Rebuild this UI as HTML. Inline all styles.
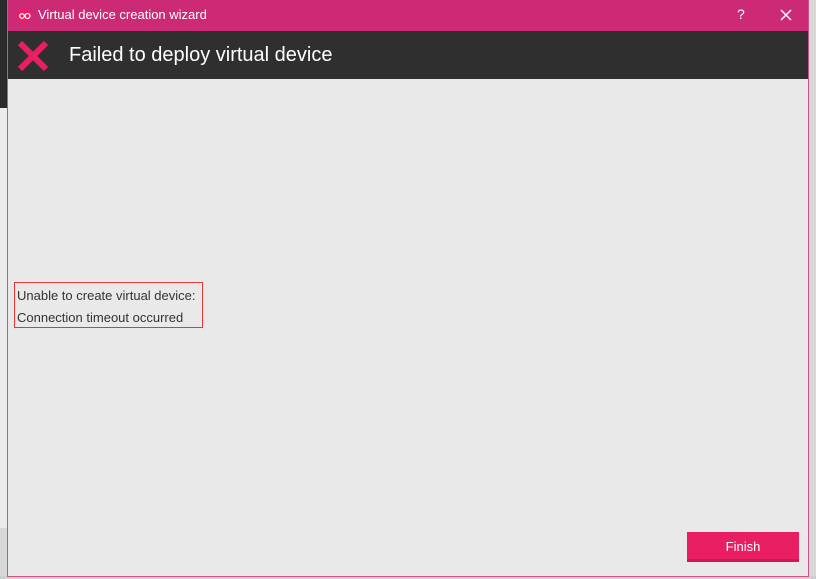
<!DOCTYPE html>
<html><head><style>
body{margin:0;width:816px;height:579px;overflow:hidden;background:#d8d8d8;font-family:"Liberation Sans",sans-serif;position:relative}
.bgl{position:absolute;left:0;top:0;width:8px;height:108px;background:#2b2b2b}
.bgl2{position:absolute;left:0;top:108px;width:8px;height:420px;background:#ececec}
.bot{position:absolute;left:0;top:576px;width:816px;height:3px;background:#cfcfcf}
.win{position:absolute;left:7px;top:0;border:1px solid #c9558a;border-top:none;background:#e9e9e9;box-sizing:border-box;width:802px;height:577px}
.tb{position:absolute;left:0;top:0;right:0;height:31px;background:#cc2a74;color:#fff;font-size:13px}
.tb .ic{position:absolute;left:9px;top:8px;width:15px;height:15px;border-radius:50%;background:#e91e63}
.tb .t{position:absolute;left:30px;top:7px}
.tb .q{position:absolute;left:729px;top:6px;font-size:14px}
.hd{position:absolute;left:0;top:31px;right:0;height:48px;background:#2f2f2f;color:#fff;font-size:20px}
.hd .t{position:absolute;left:61px;top:13px}
.box{position:absolute;left:6px;top:282px;width:189px;height:46px;border:1px solid #ee3333;box-sizing:border-box;font-size:13px;color:#333;line-height:22px;padding:2px 0 0 2px;white-space:nowrap}
.btn{position:absolute;left:679px;top:532px;width:112px;height:30px;background:#e91e63;border-bottom:3px solid #cc1a55;box-sizing:border-box;color:#fff;font-size:13px;text-align:center;line-height:29px}
</style></head><body>
<div class="bgl"></div><div class="bgl2"></div><div class="bot"></div>
<div class="win">
<div class="tb"><div class="ic"><svg width="15" height="15"><circle cx="5" cy="8" r="2.3" fill="none" stroke="#fff" stroke-width="1.2"/><circle cx="10.5" cy="8" r="2.5" fill="none" stroke="#fff" stroke-width="1.2"/></svg></div><span class="t">Virtual device creation wizard</span><span class="q">?</span>
<svg style="position:absolute;left:772px;top:9px" width="12" height="12"><path d="M1 1L11 11M11 1L1 11" stroke="#fff" stroke-width="1.5"/></svg></div>
<div class="hd"><svg style="position:absolute;left:9px;top:9px" width="32" height="32"><path d="M3 3L29 29M29 3L3 29" stroke="#e91e63" stroke-width="6"/></svg><span class="t">Failed to deploy virtual device</span></div>
<div class="box">Unable to create virtual device:<br>Connection timeout occurred</div>
<div class="btn">Finish</div>
</div>
</body></html>
